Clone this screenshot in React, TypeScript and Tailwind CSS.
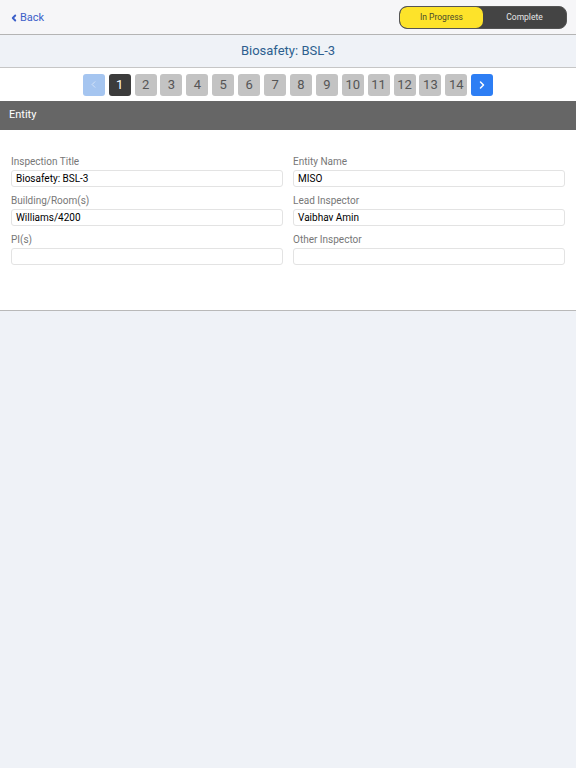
import { ChevronLeft, ChevronRight } from 'lucide-react'

const pages = [1, 2, 3, 4, 5, 6, 7, 8, 9, 10, 11, 12, 13, 14]

const fields = [
  { label: 'Inspection Title', value: 'Biosafety: BSL-3' },
  { label: 'Entity Name', value: 'MISO' },
  { label: 'Building/Room(s)', value: 'Williams/4200' },
  { label: 'Lead Inspector', value: 'Vaibhav Amin' },
  { label: 'PI(s)', value: '' },
  { label: 'Other Inspector', value: '' },
]

export default function App() {
  return (
    <div className="min-h-[768px] bg-[#eff2f7] font-['Roboto','Liberation_Sans',sans-serif]">
      {/* header */}
      <div className="flex h-[35px] items-center justify-between border-b border-[#b4b4b4] bg-[#f6f6f8] pl-[9px] pr-[9px]">
        <button className="mt-[2px] flex items-center gap-[1px] text-[11px] text-[#3b5fc9]">
          <ChevronLeft className="h-[10px] w-[10px]" strokeWidth={4.5} />
          Back
        </button>
        <div className="flex h-[23px] w-[168px] overflow-hidden rounded-[8px] border border-[#555] bg-[#444] text-[8.5px]">
          <div className="flex w-1/2 items-center justify-center rounded-[7px] bg-[#fde32a] text-[#4a4a2a]">
            In Progress
          </div>
          <div className="flex w-1/2 items-center justify-center text-[#e6e6e6]">Complete</div>
        </div>
      </div>

      {/* title */}
      <div className="flex h-[33px] items-center justify-center border-b border-[#c6c6c6] bg-[#eff2f7] text-[13px] text-[#2d5f8f]">
        Biosafety: BSL-3
      </div>

      {/* pager */}
      <div className="flex h-[33px] items-center justify-center gap-[3.9px] bg-white">
        <button className="flex h-[22px] w-[22px] items-center justify-center rounded-[3px] bg-[#a5c5f0] text-[#d8e6f8]">
          <ChevronLeft className="h-[11px] w-[11px]" strokeWidth={2} />
        </button>
        {pages.map(p => (
          <button
            key={p}
            className={`flex h-[22px] w-[22px] items-center justify-center rounded-[3px] text-[13px] ${
              p === 1 ? 'bg-[#3c3c3c] text-white' : 'bg-[#c3c3c3] text-[#555]'
            }`}
          >
            {p}
          </button>
        ))}
        <button className="flex h-[22px] w-[22px] items-center justify-center rounded-[3px] bg-[#2d7ef4] text-white">
          <ChevronRight className="h-[12px] w-[12px]" strokeWidth={3} />
        </button>
      </div>

      {/* section band */}
      <div className="flex h-[29px] items-center bg-[#666] pl-[9px] text-[11px] text-white">Entity</div>

      {/* form */}
      <div className="border-b border-[#b9b9b9] bg-white px-[11px] pb-[45px] pt-[25px]">
        <div className="grid grid-cols-2 gap-x-[10px] gap-y-[7px]">
          {fields.map(f => (
            <div key={f.label} className="flex flex-col">
              <label className="mb-[1px] text-[10px] leading-[14px] text-[#777]">{f.label}</label>
              <div className="flex h-[17px] items-center rounded-[3px] border border-[#e3e3e3] px-[4px] text-[10px] text-black">
                {f.value}
              </div>
            </div>
          ))}
        </div>
      </div>
    </div>
  )
}
